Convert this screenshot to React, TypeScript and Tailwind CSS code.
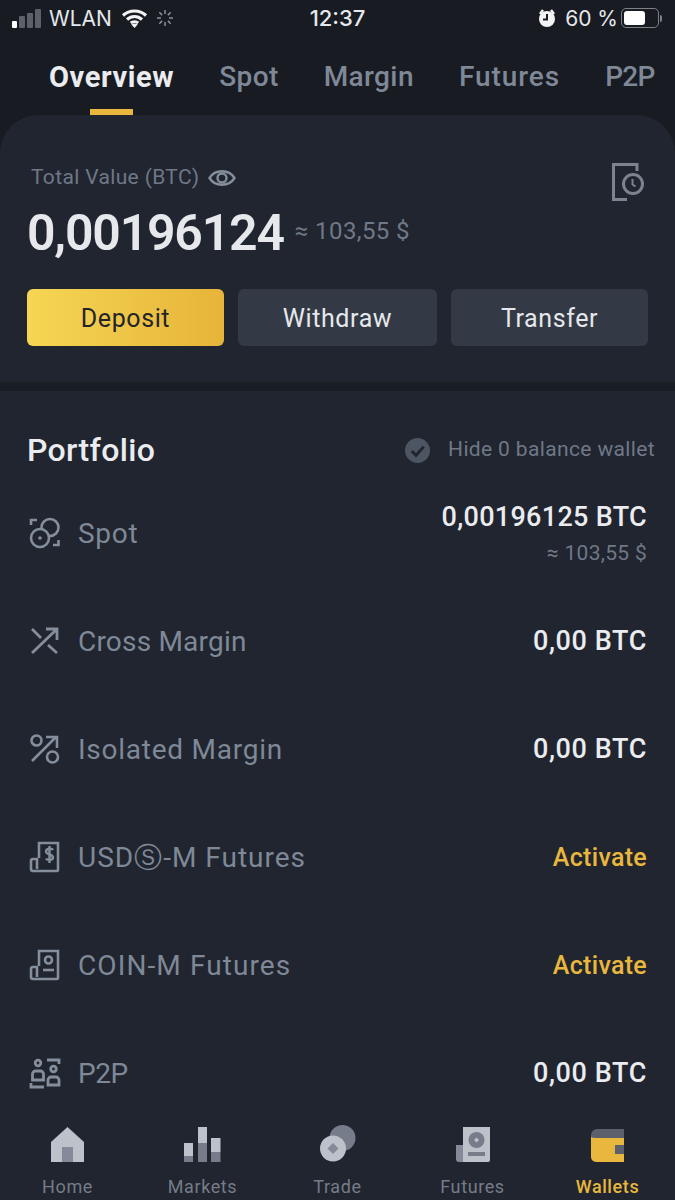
const tabs = [
  { label: "Spot", track: "tracking-[0.4px]" },
  { label: "Margin", track: "tracking-[0.4px]" },
  { label: "Futures", track: "tracking-[0.95px]" },
  { label: "P2P", track: "tracking-[-0.7px]" },
];

const IconSpot = () => (
  <svg width="32" height="32" viewBox="0 0 32 32" fill="none" stroke="#848e9c" strokeWidth="2.600">
    <circle cx="21" cy="10.500" r="8.500" />
    <circle cx="11" cy="21" r="9" fill="#20252f" />
    <circle cx="11" cy="21" r="1.800" fill="#848e9c" stroke="none" />
    <path d="M8 3H2v5M24 28h5.500v-5" />
  </svg>
);

const IconCross = () => (
  <svg width="32" height="32" viewBox="0 0 32 32" fill="none" stroke="#848e9c" strokeWidth="2.800">
    <path d="M3 28 L28 4M17 4h11v11M3 4l9 9M19 20l9 8" />
  </svg>
);

const IconIsolated = () => (
  <svg width="32" height="32" viewBox="0 0 32 32" fill="none" stroke="#848e9c" strokeWidth="2.600">
    <circle cx="7.500" cy="7.500" r="5" />
    <circle cx="23.500" cy="24" r="5.500" />
    <path d="M3 28 L27 4M17 4h11v11" />
  </svg>
);

const IconUsd = () => (
  <svg width="32" height="32" viewBox="0 0 32 32" fill="none" stroke="#848e9c" strokeWidth="2.600">
    <path d="M10 17V2h19v27a1 1 0 0 1-1 1H4a2 2 0 0 1-2-2v-8a2 2 0 0 1 2-2h4v10" />
    <path d="M24 9c-1-2-7-2-7 1.500s7 2.500 7 6c0 3-6 3-7 1M20.500 5v17" strokeWidth="2.400" />
  </svg>
);

const IconCoin = () => (
  <svg width="32" height="32" viewBox="0 0 32 32" fill="none" stroke="#848e9c" strokeWidth="2.600">
    <path d="M10 17V2h19v27a1 1 0 0 1-1 1H4a2 2 0 0 1-2-2v-8a2 2 0 0 1 2-2h4v10" />
    <circle cx="19.500" cy="11" r="3.500" />
    <path d="M14 21h11" />
  </svg>
);

const IconP2p = () => (
  <svg width="32" height="32" viewBox="0 0 32 32" fill="none" stroke="#848e9c" strokeWidth="2.800">
    <circle cx="9" cy="6" r="2.800" />
    <path d="M3.500 23v-6a3 3 0 0 1 3-3h5a3 3 0 0 1 3 3v6z" />
    <circle cx="24.500" cy="12" r="2.800" />
    <path d="M19 28v-5a3 3 0 0 1 3-3h5a3 3 0 0 1 3 3v5z" />
    <path d="M18 3h12v4M2 26v4h13" />
  </svg>
);

const rows = [
  { label: "Spot", track: "tracking-[0.7px]", value: "0,00196125 BTC", sub: "≈ 103,55 $", icon: <IconSpot /> },
  { label: "Cross Margin", track: "tracking-[0.2px]", value: "0,00 BTC", icon: <IconCross /> },
  { label: "Isolated Margin", track: "tracking-[0.75px]", value: "0,00 BTC", icon: <IconIsolated /> },
  { label: "USDⓈ-M Futures", track: "tracking-[1px]", value: "Activate", active: true, icon: <IconUsd /> },
  { label: "COIN-M Futures", track: "tracking-[1.1px]", value: "Activate", active: true, icon: <IconCoin /> },
  { label: "P2P", track: "tracking-[-0.5px]", value: "0,00 BTC", icon: <IconP2p /> },
];

const NavHome = () => (
  <svg width="33" height="35" viewBox="0 0 33 35">
    <path d="M16.500 0 L33 15V35H0V15z" fill="#bcc1ca" />
    <rect x="11" y="20" width="11" height="15" fill="#848a9a" />
  </svg>
);

const NavMarkets = () => (
  <svg width="37" height="35" viewBox="0 0 37 35">
    <rect x="0" y="16" width="9" height="13" fill="#bcc1ca" />
    <rect x="0" y="29" width="9" height="6" fill="#767c8a" />
    <rect x="14" y="0" width="9" height="16" fill="#bcc1ca" />
    <rect x="14" y="16" width="9" height="19" fill="#767c8a" />
    <rect x="27" y="11" width="9.500" height="14" fill="#bcc1ca" />
    <rect x="27" y="25" width="9.500" height="10" fill="#767c8a" />
  </svg>
);

const NavTrade = () => (
  <svg width="36" height="37" viewBox="0 0 36 37">
    <circle cx="22.500" cy="13" r="13" fill="#767c8a" />
    <circle cx="13" cy="23.500" r="13" fill="#bcc1ca" />
    <path d="M13 18l5.500 5.500-5.500 5.500-5.500-5.500z" fill="#848a9a" />
  </svg>
);

const NavFutures = () => (
  <svg width="36" height="35" viewBox="0 0 36 35">
    <path d="M1 18h8v17H4a3 3 0 0 1-3-3z" fill="#848a9a" />
    <path d="M8 0h27v33a2 2 0 0 1-2 2H8z" fill="#bcc1ca" />
    <circle cx="21.500" cy="13" r="8" fill="#767c8a" />
    <path d="M21.500 10.500l2.500 2.500-2.500 2.500-2.500-2.500z" fill="#bcc1ca" />
    <rect x="13" y="25" width="17" height="4" fill="#767c8a" />
  </svg>
);

const NavWallets = () => (
  <svg width="33" height="33" viewBox="0 0 33 33">
    <path d="M0 6a6 6 0 0 1 6-6h27v9H0z" fill="#5b606d" />
    <path d="M0 8q1 1 5 1h28v24H5a5 5 0 0 1-5-5z" fill="#e9b73d" />
    <rect x="24" y="16" width="9" height="9" fill="#5b606d" />
  </svg>
);

const nav = [
  { label: "Home", icon: <NavHome /> },
  { label: "Markets", icon: <NavMarkets /> },
  { label: "Trade", icon: <NavTrade /> },
  { label: "Futures", icon: <NavFutures /> },
  { label: "Wallets", icon: <NavWallets />, active: true },
];

export default function App() {
  return (
    <div className="w-[675px] h-[1200px] overflow-hidden flex flex-col bg-[#181b22] font-['Roboto',sans-serif]">
      {/* status bar */}
      <div className="h-[36px] shrink-0 grid grid-cols-3 items-center px-[12px] text-[#e6e8ec] font-['Inter',sans-serif]">
        <div className="flex items-center">
          <div className="flex items-end gap-[2px]">
            <div className="w-[5px] h-[7px] rounded-[1px] bg-white" />
            <div className="w-[6px] h-[12px] rounded-[1px] bg-[#5c6068]" />
            <div className="w-[6px] h-[15px] rounded-[1px] bg-[#5c6068]" />
            <div className="w-[6px] h-[19px] rounded-[1px] bg-[#5c6068]" />
          </div>
          <span className="ml-[8px] text-[21px] leading-none">WLAN</span>
          <svg className="ml-[9px]" width="27" height="20" viewBox="0 0 27 20" fill="none" stroke="#f2f3f5" strokeWidth="3.200">
            <path d="M2 7.500c6.500-6 16.500-6 23 0M6 11.500c4.500-4 10.500-4 15 0M9.800 15c2-1.700 5.400-1.700 7.400 0" />
            <path d="M13.500 20l-3.200-3.400c2-1.500 4.400-1.500 6.400 0z" fill="#f2f3f5" stroke="none" />
          </svg>
          <svg className="ml-[8px]" width="18" height="18" viewBox="0 0 18 18" fill="none" stroke="#8b8f96" strokeWidth="1.500">
            <path d="M9 1v4M9 13v4M1 9h4M13 9h4M3.300 3.300l2.800 2.800M11.900 11.900l2.800 2.800M3.300 14.700l2.800-2.800M11.900 6.100l2.800-2.800" />
          </svg>
        </div>
        <div className="text-center text-[22px] font-medium leading-none">12:37</div>
        <div className="flex items-center justify-end pr-[1px]">
          <svg width="18" height="19" viewBox="0 0 18 19">
            <circle cx="9" cy="10" r="8" fill="#f2f3f5" />
            <path d="M2 5l3-4 M16 5l-3-4" stroke="#f2f3f5" strokeWidth="2.500" />
            <path d="M9 5v5.500H5" fill="none" stroke="#181b22" strokeWidth="2" />
          </svg>
          <span className="ml-[9px] text-[21px] leading-none">60 %</span>
          <div className="ml-[3px] w-[38px] h-[20px] rounded-[5px] border border-[#7d8087] p-[2px]">
            <div className="w-[21px] h-full rounded-[3px] bg-white" />
          </div>
          <div className="ml-[1px] w-[2px] h-[7px] rounded-r-[2px] bg-[#7d8087]" />
        </div>
      </div>

      {/* tabs */}
      <div className="h-[79px] shrink-0 flex gap-[45px] pl-[49px] pt-[21px] text-[28px] leading-[40px] font-medium text-[#7f8897] whitespace-nowrap">
        <div className="relative h-full text-[29px] font-bold tracking-[0.6px] text-[#eaecef]">
          Overview
          <div className="absolute left-[41px] bottom-0 w-[43px] h-[6px] bg-[#e9b73d]" />
        </div>
        {tabs.map((t) => (
          <div key={t.label} className={t.track}>
            {t.label}
          </div>
        ))}
      </div>

      {/* balance card */}
      <div className="h-[267px] shrink-0 rounded-t-[38px] bg-[#20252f] px-[27px] pt-[47px]">
        <div className="flex justify-between pr-[3px]">
          <div className="flex flex-col">
            <div className="flex items-center h-[32px] pl-[4px] text-[21px] tracking-[0.35px] text-[#6f7887]">
              Total Value (BTC)
              <svg className="ml-[9px]" width="28" height="22" viewBox="0 0 28 22" fill="none" stroke="#848e9c" strokeWidth="2.400">
                <path d="M1.500 11C7 2 21 2 26.500 11C21 20 7 20 1.500 11z" />
                <circle cx="14" cy="11" r="4.500" />
              </svg>
            </div>
            <div className="flex items-center mt-[11px]">
              <span className="text-[50px] leading-[56px] font-semibold tracking-[-1.2px] text-[#e6e8ec]">0,00196124</span>
              <span className="ml-[11px] mb-[4px] text-[24px] tracking-[0.4px] text-[#6f7887]">≈ 103,55 $</span>
            </div>
          </div>
          <svg className="mt-[1px]" width="33" height="38" viewBox="0 0 33 38" fill="none" stroke="#7b8391" strokeWidth="3">
            <path d="M25 8V1.500H1.500v35H15" />
            <circle cx="21" cy="21" r="9.500" />
            <path d="M20.500 16v5.500l3 2" strokeWidth="2" />
          </svg>
        </div>
        <div className="flex gap-[14px] mt-[28px]">
          <div className="w-[197px] h-[57px] pt-[3px] rounded-[6px] flex items-center justify-center bg-gradient-to-r from-[#f6d654] to-[#e6b438] text-[25px] tracking-[0.6px] text-[#22242a]">
            Deposit
          </div>
          <div className="w-[199px] h-[57px] pt-[3px] rounded-[6px] flex items-center justify-center bg-[#333a45] text-[25px] tracking-[0.6px] text-[#e6e8ec]">
            Withdraw
          </div>
          <div className="w-[197px] h-[57px] pt-[3px] rounded-[6px] flex items-center justify-center bg-[#333a45] text-[25px] tracking-[0.6px] text-[#e6e8ec]">
            Transfer
          </div>
        </div>
      </div>
      <div className="h-[9px] shrink-0 bg-[#191d24]" />

      {/* portfolio */}
      <div className="flex-1 min-h-0 bg-[#20252f] flex flex-col">
        <div className="h-[88px] shrink-0 flex items-center justify-between pl-[27px] pr-[20px] pt-[30px]">
          <span className="text-[32px] font-medium tracking-[0.35px] text-[#eaecef]">Portfolio</span>
          <div className="flex items-center text-[21px] tracking-[0.36px] text-[#6f7887]">
            <svg width="25" height="25" viewBox="0 0 26 26">
              <circle cx="13" cy="13" r="13" fill="#4d5562" />
              <path d="M7 13.500l4.500 4.500L19.500 9" fill="none" stroke="#20252f" strokeWidth="3" />
            </svg>
            <span className="ml-[18px]">Hide 0 balance wallet</span>
          </div>
        </div>
        <div className="h-[631px] shrink-0 overflow-hidden">
          {rows.map((r) => (
            <div key={r.label} className="h-[108px] flex items-center justify-between pl-[29px] pr-[28px]">
              <div className="flex items-center">
                {r.icon}
                <span className={`ml-[17px] mt-[2px] text-[28px] text-[#7f8897] ${r.track}`}>{r.label}</span>
              </div>
              <div className="flex flex-col items-end">
                <span
                  className={
                    r.active
                      ? "mt-[2px] text-[25px] font-medium tracking-[0.3px] text-[#e9b73d]"
                      : r.sub
                        ? "text-[27px] font-medium tracking-[0.3px] text-[#eaecef]"
                        : "text-[27px] font-medium tracking-[0.6px] text-[#eaecef]"
                  }
                >
                  {r.value}
                </span>
                {r.sub && <span className="text-[21px] tracking-[0.3px] text-[#6f7887]">{r.sub}</span>}
              </div>
            </div>
          ))}
        </div>
        <div className="flex-1 grid grid-cols-5 pt-[14px]">
          {nav.map((n) => (
            <div key={n.label} className="flex flex-col items-center">
              <div className="h-[38px] flex items-end">{n.icon}</div>
              <span className={`mt-[11px] text-[18px] tracking-[0.6px] ${n.active ? "font-medium text-[#e9b73d]" : "text-[#767c88]"}`}>
                {n.label}
              </span>
            </div>
          ))}
        </div>
      </div>
    </div>
  );
}
